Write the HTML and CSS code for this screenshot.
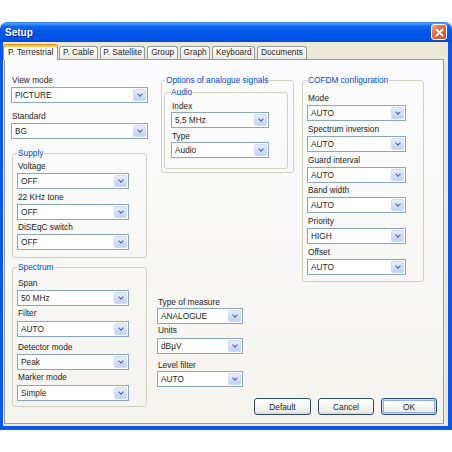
FILE: index.html
```html
<!DOCTYPE html>
<html>
<head>
<meta charset="utf-8">
<title>Setup</title>
<link rel="stylesheet" href="styles.css">
</head>
<body>
<div class="window">
  <div class="titlebar">
    <span class="title">Setup</span>
    <span class="close"><svg width="13" height="13" viewBox="0 0 13 13"><path d="M3.5 3.5 L9.5 9.5 M9.5 3.5 L3.5 9.5" stroke="#fff" stroke-width="1.8" stroke-linecap="round"/></svg></span>
  </div>
  <div class="body">
    <div class="tabs">
      <div class="tab active">P. Terrestrial</div>
      <div class="tab">P. Cable</div>
      <div class="tab">P. Satellite</div>
      <div class="tab">Group</div>
      <div class="tab">Graph</div>
      <div class="tab">Keyboard</div>
      <div class="tab">Documents</div>
    </div>
    <div class="panel">
      <div class="col-left">
        <div class="lbl">View mode</div>
        <div class="combo w137 mt1"><span class="val">PICTURE</span><span class="arrow"></span></div>
        <div class="lbl mt8">Standard</div>
        <div class="combo w137 mt1"><span class="val">BG</span><span class="arrow"></span></div>

        <fieldset class="grp supply">
          <legend>Supply</legend>
          <div class="lbl">Voltage</div>
          <div class="combo w112 mt1"><span class="val">OFF</span><span class="arrow"></span></div>
          <div class="lbl mt25">22 KHz tone</div>
          <div class="combo w112 mt1"><span class="val">OFF</span><span class="arrow"></span></div>
          <div class="lbl mt25">DiSEqC switch</div>
          <div class="combo w112 mt1"><span class="val">OFF</span><span class="arrow"></span></div>
        </fieldset>

        <fieldset class="grp spectrum">
          <legend>Spectrum</legend>
          <div class="lbl">Span</div>
          <div class="combo w112 mt15"><span class="val">50 MHz</span><span class="arrow"></span></div>
          <div class="lbl mt15">Filter</div>
          <div class="combo w112 mt2"><span class="val">AUTO</span><span class="arrow"></span></div>
          <div class="lbl mt5">Detector mode</div>
          <div class="combo w112 mt15"><span class="val">Peak</span><span class="arrow"></span></div>
          <div class="lbl mt15">Marker mode</div>
          <div class="combo w112 mt2"><span class="val">Simple</span><span class="arrow"></span></div>
        </fieldset>
      </div>

      <div class="right-area">
        <div class="top">
          <div class="col-mid">
            <fieldset class="grp options">
              <legend>Options of analogue signals</legend>
              <fieldset class="grp audio">
                <legend>Audio</legend>
                <div class="lbl">Index</div>
                <div class="combo w98"><span class="val">5,5 MHz</span><span class="arrow"></span></div>
                <div class="lbl mt3">Type</div>
                <div class="combo w98"><span class="val">Audio</span><span class="arrow"></span></div>
              </fieldset>
            </fieldset>

            <div class="measure">
              <div class="lbl">Type of measure</div>
              <div class="combo w86"><span class="val">ANALOGUE</span><span class="arrow"></span></div>
              <div class="lbl mt1">Units</div>
              <div class="combo w86 mt2"><span class="val">dBµV</span><span class="arrow"></span></div>
              <div class="lbl mt55">Level filter</div>
              <div class="combo w86"><span class="val">AUTO</span><span class="arrow"></span></div>
            </div>
          </div>

          <div class="col-right">
            <fieldset class="grp cofdm">
              <legend>COFDM configuration</legend>
              <div class="lbl">Mode</div>
              <div class="combo w99 mt1 mb"><span class="val">AUTO</span><span class="arrow"></span></div>
              <div class="lbl">Spectrum inversion</div>
              <div class="combo w99 mt1 mb"><span class="val">AUTO</span><span class="arrow"></span></div>
              <div class="lbl">Guard interval</div>
              <div class="combo w99 mt1 mb"><span class="val">AUTO</span><span class="arrow"></span></div>
              <div class="lbl">Band width</div>
              <div class="combo w99 mt1 mb"><span class="val">AUTO</span><span class="arrow"></span></div>
              <div class="lbl">Priority</div>
              <div class="combo w99 mt1 mb"><span class="val">HIGH</span><span class="arrow"></span></div>
              <div class="lbl">Offset</div>
              <div class="combo w99 mt1"><span class="val">AUTO</span><span class="arrow"></span></div>
            </fieldset>
          </div>
        </div>

        <div class="buttons">
          <div class="btn w57">Default</div>
          <div class="btn w56">Cancel</div>
          <div class="btn w56 default">OK</div>
        </div>
      </div>
    </div>
  </div>
</div>
</body>
</html>
```

FILE: styles.css
```css
* { box-sizing: border-box; }

body {
  margin: 0;
  background: #ffffff;
  font-family: "Liberation Sans", Arial, sans-serif;
  font-size: 8.3px;
  color: #1c1c1c;
}

.window {
  margin-top: 22px;
  width: 452px;
  height: 408px;
  display: flex;
  flex-direction: column;
}

.titlebar {
  height: 20px;
  flex: none;
  display: flex;
  align-items: center;
  padding: 0 5px 0 5px;
  border-radius: 7px 7px 0 0;
  background: linear-gradient(to bottom, #2a7cf8 0%, #4b9bff 8%, #1266ec 22%, #0457e6 50%, #0055ea 80%, #0249d3 100%);
}

.title {
  color: #fff;
  font-weight: bold;
  font-size: 10px;
  text-shadow: 1px 1px 0 #0b2a9a;
}

.close {
  margin-left: auto;
  width: 16px;
  height: 16px;
  border: 1px solid #fff;
  border-radius: 3px;
  background: linear-gradient(135deg, #f3a88a 0%, #e66c40 40%, #d24d20 100%);
  display: flex;
  align-items: center;
  justify-content: center;
}

.body {
  flex: 1;
  display: flex;
  flex-direction: column;
  background: #ece9d8;
  border-style: solid;
  border-color: #0c57e6;
  border-width: 0 4px 4px 3px;
  padding: 2px 4px 2px 1px;
}

.tabs {
  height: 15px;
  flex: none;
  display: flex;
  align-items: flex-end;
  position: relative;
  z-index: 1;
}

.tab {
  height: 13px;
  line-height: 11px;
  padding: 0 2.7px;
  margin-left: 2px;
  border: 1px solid #919b9c;
  border-bottom: none;
  border-radius: 3px 3px 0 0;
  background: linear-gradient(#ffffff, #ecebe6);
  white-space: nowrap;
}

.tab.active {
  height: 16px;
  line-height: 14px;
  margin-left: -1px;
  margin-bottom: -1px;
  padding: 0 4px;
  background: #fcfcfe;
  border-top: 1px solid #e68b2c;
  box-shadow: inset 0 2px 0 #ffc83c;
}

.tab.active + .tab { margin-left: 1px; }

.panel {
  flex: 1;
  display: flex;
  align-items: flex-start;
  border: 1px solid #919b9c;
  background: linear-gradient(#fcfcfe, #f4f3ee);
  padding: 15px 0 0 6px;
}

.col-left { width: 137px; flex: none; }

.right-area {
  width: 280px;
  margin-left: 9px;
  flex: none;
  display: flex;
  flex-direction: column;
}

.top { display: flex; align-items: flex-start; }
.col-mid { width: 137px; flex: none; }
.col-right { width: 122px; margin-left: 8px; flex: none; }

.lbl {
  height: 11px;
  line-height: 11px;
  padding-left: 1px;
  white-space: nowrap;
}

.combo {
  height: 16px;
  display: flex;
  align-items: center;
  border: 1px solid #8aa5c2;
  background: #fff;
  padding-left: 3px;
}

.val { line-height: 14px; white-space: nowrap; }

.arrow {
  margin: 1px 1px 1px auto;
  align-self: stretch;
  width: 13px;
  flex: none;
  border-radius: 2px;
  border: 1px solid #cbd9fb;
  background: linear-gradient(#e6edfe, #c0d2fa);
  display: flex;
  align-items: center;
  justify-content: center;
}

.arrow::after {
  content: "";
  width: 3px;
  height: 3px;
  border-right: 1.6px solid #4d6185;
  border-bottom: 1.6px solid #4d6185;
  transform: translateY(-1px) rotate(45deg);
}

.w137 { width: 137px; }
.w112 { width: 112px; }
.w99 { width: 99px; }
.w98 { width: 98px; }
.w86 { width: 86px; }

.mt1 { margin-top: 1px; }
.mt15 { margin-top: 1.5px; }
.mt2 { margin-top: 2px; }
.mt25 { margin-top: 2.5px; }
.mt3 { margin-top: 3px; }
.mt5 { margin-top: 5px; }
.mt55 { margin-top: 5.5px; }
.mt8 { margin-top: 8px; }
.mb { margin-bottom: 2.8px; }

.grp {
  margin: 0;
  min-inline-size: 0;
  border: 1px solid #d0d0bf;
  border-radius: 3px;
}

.grp legend {
  padding: 0 1px;
  font-size: 8.3px;
  line-height: 11px;
  color: #0046d5;
  white-space: nowrap;
}

.supply {
  margin: 8.5px 1px 0 1px;
  padding: 2.5px 0 7px 4px;
}

.spectrum {
  margin: 3.5px 1px 0 1px;
  padding: 5px 0 5px 4px;
}

.options {
  margin-left: 4px;
  padding: 1px 5px 3px 2px;
}
.options > legend { margin-left: 1px; }

.audio {
  padding: 3px 0 10px 6px;
}
.audio > legend { margin-left: -1px; }

.measure { margin-top: 124px; }

.cofdm {
  padding: 7px 0 6px 4px;
}

.buttons {
  display: flex;
  justify-content: flex-end;
  gap: 7px;
  margin-top: 11.5px;
}

.btn {
  height: 17px;
  display: flex;
  align-items: center;
  justify-content: center;
  border: 1px solid #2b4a72;
  border-radius: 3px;
  background: linear-gradient(#ffffff 0%, #f6f6f2 45%, #ecebe4 85%, #d8d3c8 100%);
}

.btn.default {
  box-shadow: inset 0 0 0 1px #c9dcfb, inset 0 0 0 2px #8fb0ec;
}

.w57 { width: 57px; }
.w56 { width: 56px; }
```
